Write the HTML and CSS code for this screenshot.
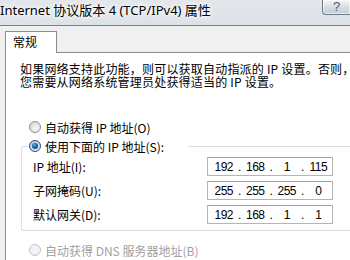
FILE: index.html
```html
<!DOCTYPE html>
<html lang="zh-CN">
<head>
<meta charset="utf-8">
<title>Internet 协议版本 4 (TCP/IPv4) 属性</title>
<link rel="stylesheet" href="styles.css">
</head>
<body>
<div class="window">
  <header class="titlebar">
    <span class="title">Internet 协议版本 4 (TCP/IPv4) 属性</span>
    <span class="help">?</span>
  </header>
  <div class="dialog">
    <div class="tabs">
      <div class="tab">常规</div>
      <div class="tab-fill"></div>
    </div>
    <div class="panel">
      <p class="intro"><span class="line">如果网络支持此功能，则可以获取自动指派的 IP 设置。否则，</span><span class="line">您需要从网络系统管理员处获得适当的 IP 设置。</span></p>
      <div class="radio-row"><span class="radio"></span><span>自动获得 IP 地址(O)</span></div>
      <fieldset class="group">
        <legend class="legend"><span class="radio checked"></span><span>使用下面的 IP 地址(S):</span></legend>
        <div class="rows">
          <span class="label">IP 地址(I):</span>
          <div class="ip"><span>192</span><i>.</i><span>168</span><i>.</i><span>1</span><i>.</i><span>115</span></div>
          <span class="label">子网掩码(U):</span>
          <div class="ip"><span>255</span><i>.</i><span>255</span><i>.</i><span>255</span><i>.</i><span>0</span></div>
          <span class="label">默认网关(D):</span>
          <div class="ip"><span>192</span><i>.</i><span>168</span><i>.</i><span>1</span><i>.</i><span>1</span></div>
        </div>
      </fieldset>
      <div class="radio-row disabled"><span class="radio"></span><span>自动获得 DNS 服务器地址(B)</span></div>
    </div>
  </div>
</div>
</body>
</html>
```
FILE: styles.css
```css
html, body {
  margin: 0;
  padding: 0;
}
body {
  width: 350px;
  height: 260px;
  overflow: hidden;
  background: #f0f0f0;
  font-family: "Noto Sans CJK SC", sans-serif;
  font-size: 12px;
  color: #000;
}
.window {
  width: 350px;
  height: 260px;
  overflow: hidden;
}
.titlebar {
  height: 25px;
  border-bottom: 1px solid #7d8083;
  background: linear-gradient(#e3e7eb, #dde2e7);
  display: flex;
  justify-content: space-between;
  align-items: flex-start;
}
.title {
  font-family: "Noto Sans", "Noto Sans CJK SC", sans-serif;
  font-size: 13px;
  line-height: 21px;
  text-shadow: 0 0 6px #fff, 0 0 6px #fff, 0 0 3px #fff;
  white-space: nowrap;
}
.help {
  width: 27px;
  height: 14px;
  border: 1px solid #6b7a88;
  border-top: none;
  border-right: none;
  border-radius: 0 0 0 4px;
  background: linear-gradient(#f4f6f8, #d3d9e0 60%, #c6cdd5);
  color: #4c5966;
  font-family: "Liberation Sans", sans-serif;
  font-size: 13px;
  line-height: 14px;
  text-align: center;
  box-shadow: inset 0 0 0 1px rgba(255,255,255,0.6);
}
.dialog {
  padding: 5px 0 0 5px;
}
.tabs {
  display: flex;
  align-items: flex-end;
}
.tab {
  width: 52px;
  height: 22px;
  box-sizing: border-box;
  border: 1px solid #898c95;
  border-bottom: none;
  background: #fff;
  padding-left: 7px;
  line-height: 20px;
}
.tab-fill {
  flex: 1;
  border-bottom: 1px solid #898c95;
}
.panel {
  background: #fff;
  border-left: 1px solid #898c95;
  padding: 9px 0 0 14px;
  height: 220px;
}
.intro {
  margin: 0;
  letter-spacing: 0.2px;
  white-space: nowrap;
}
.line {
  display: block;
  height: 13px;
  line-height: 13px;
}
.radio-row {
  display: flex;
  align-items: center;
  gap: 4px;
  height: 16px;
  padding-left: 9px;
  margin-top: 31px;
  white-space: nowrap;
}
.radio {
  width: 12px;
  height: 12px;
  box-sizing: border-box;
  border-radius: 50%;
  border: 1px solid #8e8f8f;
  background: radial-gradient(circle at 60% 65%, #f5f5f5 0, #e6e6e6 45%, #c9c9c9 100%);
  flex: none;
  display: inline-flex;
  align-items: center;
  justify-content: center;
}
.radio.checked {
  border-color: #2c4f76;
  background: radial-gradient(circle at 60% 65%, #e8f2fb 0, #c9ddf0 50%, #9ab9d8 100%);
}
.radio.checked::after {
  content: "";
  width: 6px;
  height: 6px;
  border-radius: 50%;
  background: radial-gradient(circle at 40% 35%, #6fb0e8 0, #1b5e9e 45%, #0b2e55 100%);
}
.radio-row.disabled {
  color: #a0a0a0;
  margin-top: 11px;
}
.radio-row.disabled .radio {
  border-color: #c4c4c4;
  background: #f2f2f2;
}
.group {
  margin: 3px 0 0 1px;
  padding: 0 0 6px 6px;
  border: 1px solid #d5dfe5;
  border-right: none;
  border-radius: 3px 0 0 3px;
  width: 324px;
}
.legend {
  display: flex;
  align-items: center;
  gap: 4px;
  height: 16px;
  padding: 0 24px 0 1px;
  white-space: nowrap;
}
.rows {
  display: grid;
  grid-template-columns: 174px 126px;
  row-gap: 5px;
  margin: 3px 0 0 5px;
  align-items: center;
}
.label {
  white-space: nowrap;
}
.ip {
  height: 19px;
  box-sizing: border-box;
  border: 1px solid #b5b5b5;
  border-top-color: #a3a3a3;
  display: flex;
  align-items: center;
  padding-left: 2px;
  font-family: "Liberation Sans", sans-serif;
  font-size: 12px;
  letter-spacing: -0.5px;
}
.ip span {
  flex: 1;
  text-align: center;
}
.ip i {
  font-style: normal;
  width: 4px;
  text-align: center;
}
```
